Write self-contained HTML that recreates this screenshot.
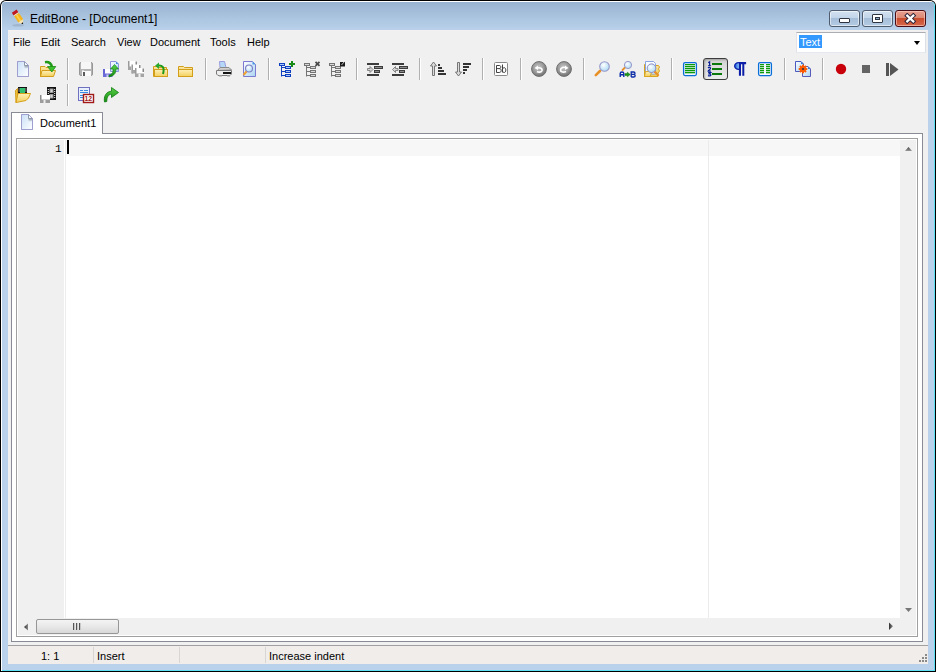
<!DOCTYPE html>
<html><head><meta charset="utf-8">
<style>
*{margin:0;padding:0;box-sizing:border-box}
html,body{width:936px;height:672px;overflow:hidden;background:#fff;font-family:"Liberation Sans",sans-serif;}
.a{position:absolute}
.t{position:absolute;white-space:pre;font-size:11px;line-height:13px;color:#000}
</style></head><body>
<!-- frame -->
<div class="a" style="left:0;top:0;width:936px;height:672px;background:#000;border-radius:6px 6px 0 0"></div>
<div class="a" style="left:1px;top:1px;width:934px;height:670px;background:#fff;border-radius:5px 5px 0 0"></div>
<div class="a" style="left:2px;top:2px;width:933px;height:669px;background:#5ee0f4;border-radius:4px 4px 0 0"></div>
<div class="a" style="left:2px;top:2px;width:932px;height:668px;background:#b9d1ea;border-radius:4px 4px 0 0"></div>
<div class="a" style="left:2px;top:2px;width:932px;height:28px;background:linear-gradient(#98b3d1,#b9d1ea);border-radius:4px 4px 0 0"></div>
<!-- client -->
<div class="a" style="left:8px;top:30px;width:920px;height:634px;background:#f0f0f0"></div>
<div class="a" style="left:8px;top:30px;width:920px;height:1px;background:#f5f1f1"></div>
<!-- title icon -->
<svg class="a" style="left:8px;top:6px" width="24" height="22" viewBox="8 6 24 22">
<ellipse cx="18" cy="25.3" rx="6" ry="1.2" fill="#8a9ab0" opacity="0.45"/>
<g transform="translate(18.4,17.4) rotate(-34)">
<rect x="-2.9" y="-7.5" width="5.8" height="3.2" fill="#c01820"/>
<rect x="-2.9" y="-4.3" width="5.8" height="1" fill="#f2e2c0"/>
<rect x="-2.9" y="-3.3" width="5.8" height="7.5" fill="#f6b41c"/>
<rect x="-1" y="-3.3" width="1.6" height="7.5" fill="#fcd050"/>
<path d="M-2.9 4.2H2.9L0 8.2Z" fill="#f8e6b0"/>
<path d="M-1.1 6.6H1.1L0 8.4Z" fill="#111"/>
</g>
</svg>
<!-- title -->
<div class="t" style="left:30px;top:12px;font-size:12px;line-height:14px;color:#000">EditBone - [Document1]</div>
<!-- window buttons -->
<div class="a" style="left:829px;top:10px;width:31px;height:17px;border:1px solid #4f5b6e;border-radius:3px;background:linear-gradient(#d3e1f0 0%,#c2d5ea 45%,#a5bdd8 46%,#b4cbe3 100%);box-shadow:inset 0 0 0 1px rgba(255,255,255,0.55)"></div>
<div class="a" style="left:839px;top:18px;width:11px;height:5px;border:1px solid #2e3440;border-radius:1px;background:#fff"></div>
<div class="a" style="left:862px;top:10px;width:31px;height:17px;border:1px solid #4f5b6e;border-radius:3px;background:linear-gradient(#d3e1f0 0%,#c2d5ea 45%,#a5bdd8 46%,#b4cbe3 100%);box-shadow:inset 0 0 0 1px rgba(255,255,255,0.55)"></div>
<div class="a" style="left:872px;top:14px;width:11px;height:9px;border:1px solid #2e3440;border-radius:1px;background:#fff"></div>
<div class="a" style="left:875px;top:17px;width:5px;height:3px;border:1px solid #2e3440;background:#8ea8c8"></div>
<div class="a" style="left:895px;top:10px;width:31px;height:17px;border:1px solid #4a0c14;border-radius:3px;background:linear-gradient(#e8a090 0%,#dc8874 45%,#c84a2a 46%,#d8684c 100%);box-shadow:inset 0 0 0 1px rgba(255,210,200,0.6)"></div>
<svg class="a" style="left:904px;top:13px" width="13" height="11" viewBox="0 0 13 11">
<path d="M3.2 2.6L9.3 8.4M9.3 2.6L3.2 8.4" stroke="#2e2438" stroke-width="4.2" stroke-linecap="square"/>
<path d="M3.2 2.6L9.3 8.4M9.3 2.6L3.2 8.4" stroke="#fff" stroke-width="2.2" stroke-linecap="square"/>
</svg>
<!-- menu -->
<div class="t" style="left:13px;top:36px">File</div>
<div class="t" style="left:41px;top:36px">Edit</div>
<div class="t" style="left:71px;top:36px">Search</div>
<div class="t" style="left:117px;top:36px">View</div>
<div class="t" style="left:150px;top:36px">Document</div>
<div class="t" style="left:210px;top:36px">Tools</div>
<div class="t" style="left:247px;top:36px">Help</div>
<!-- combo -->
<div class="a" style="left:796px;top:32px;width:130px;height:21px;background:#fff;border:1px solid #e3e9ef;border-top-color:#abadb3;border-left-color:#e2e3ea;border-right-color:#dbdfe6"></div>
<div class="a" style="left:799px;top:35px;width:23px;height:13px;background:#3399ff"></div>
<div class="t" style="left:800px;top:36px;color:#fff">Text</div>
<div class="a" style="left:914px;top:41px;width:0;height:0;border-left:3.5px solid transparent;border-right:3.5px solid transparent;border-top:4px solid #000"></div>
<!-- toolbar -->
<div class="a" style="left:703px;top:58px;width:25px;height:22px;border:1px solid #3c3c3c;border-radius:3px;background:linear-gradient(#d2d2d2,#ececec);box-shadow:inset 1px 1px 2px rgba(0,0,0,0.25)"></div>
<svg class="a" style="left:0;top:0" width="936" height="110" viewBox="0 0 936 110">
<defs>
<linearGradient id="foldsh" x1="0" y1="0" x2="0" y2="1"><stop offset="0" stop-color="#8c9aa8"/><stop offset="1" stop-color="#dfe8f2"/></linearGradient>
<linearGradient id="docg" x1="0" y1="0" x2="1" y2="1"><stop offset="0" stop-color="#c9e0f8"/><stop offset="1" stop-color="#ffffff"/></linearGradient>
<linearGradient id="docb" x1="0" y1="0" x2="1" y2="1"><stop offset="0" stop-color="#ffffff"/><stop offset="1" stop-color="#a9d4f2"/></linearGradient>
<linearGradient id="fold" x1="0" y1="0" x2="0" y2="1"><stop offset="0" stop-color="#fbe8a8"/><stop offset="1" stop-color="#f0c850"/></linearGradient>
<linearGradient id="foldf" x1="0" y1="0" x2="0" y2="1"><stop offset="0" stop-color="#fdf0b8"/><stop offset="1" stop-color="#f4cf5c"/></linearGradient>
<radialGradient id="circ" cx="0.45" cy="0.4" r="0.6"><stop offset="0" stop-color="#c8c8c8"/><stop offset="0.6" stop-color="#9a9a9a"/><stop offset="1" stop-color="#6e6e6e"/></radialGradient>
<radialGradient id="lens" cx="0.4" cy="0.35" r="0.7"><stop offset="0" stop-color="#ffffff"/><stop offset="1" stop-color="#a8d8f4"/></radialGradient>
<linearGradient id="grn" x1="0" y1="0" x2="0" y2="1"><stop offset="0" stop-color="#5ad24a"/><stop offset="1" stop-color="#138a10"/></linearGradient>
<linearGradient id="bulb" x1="0" y1="0" x2="1" y2="0"><stop offset="0" stop-color="#1e5ad8"/><stop offset="1" stop-color="#8cc8f8"/></linearGradient>
</defs>
<!-- separators row1 -->
<g fill="#b0b0b0">
<rect x="67" y="58" width="1" height="22"/><rect x="205" y="58" width="1" height="22"/><rect x="268" y="58" width="1" height="22"/>
<rect x="356" y="58" width="1" height="22"/><rect x="419" y="58" width="1" height="22"/><rect x="482" y="58" width="1" height="22"/>
<rect x="520" y="58" width="1" height="22"/><rect x="583" y="58" width="1" height="22"/><rect x="671" y="58" width="1" height="22"/>
<rect x="784" y="58" width="1" height="22"/><rect x="822" y="58" width="1" height="22"/>
<rect x="67" y="84" width="1" height="22"/>
</g>
<g fill="#ffffff">
<rect x="68" y="58" width="1" height="22"/><rect x="206" y="58" width="1" height="22"/><rect x="269" y="58" width="1" height="22"/>
<rect x="357" y="58" width="1" height="22"/><rect x="420" y="58" width="1" height="22"/><rect x="483" y="58" width="1" height="22"/>
<rect x="521" y="58" width="1" height="22"/><rect x="584" y="58" width="1" height="22"/><rect x="672" y="58" width="1" height="22"/>
<rect x="785" y="58" width="1" height="22"/><rect x="823" y="58" width="1" height="22"/>
<rect x="68" y="84" width="1" height="22"/>
</g>

<!-- 1 new doc -->
<g transform="translate(15,61)">
<path d="M2.5 0.5H9.5L13.5 4.5V15.5H2.5Z" fill="url(#docg)" stroke="#a4a4d4"/>
<rect x="9.5" y="4.5" width="4" height="3" fill="url(#foldsh)"/><path d="M9.5 0.5V4.5H13.5Z" fill="#f8fafc"/><path d="M9.5 0.5V4.5H13.5" fill="none" stroke="#8c98a8"/><path d="M2.5 0.5H9.5L13.5 4.5V15.5H2.5Z" fill="none" stroke="#a0a0d0"/>
</g>
<!-- 2 open with arrow -->
<g transform="translate(40,61)">
<path d="M0.5 5.5H5L6 6.5H12.5V15.5H0.5Z" fill="url(#fold)" stroke="#d39e1a"/>
<path d="M0.5 15.5L2 9.5H15.5L13.5 15.5Z" fill="url(#foldf)" stroke="#d39e1a"/>
<path d="M5 1.2C9 0.5 11 2 12 6" stroke="#1f9a18" stroke-width="2.6" fill="none"/>
<path d="M7.5 5.5H15.8L11.8 11Z" fill="#3cc02c" stroke="#1a8a14" stroke-width="0.8"/>
</g>
<!-- 3 save grey -->
<g transform="translate(78,61)">
<rect x="1.5" y="1.5" width="13" height="13" rx="1.5" fill="#b4b4b4" stroke="#969696"/>
<rect x="3" y="1" width="10" height="7" fill="#f6f6f6"/>
<rect x="4" y="9" width="2" height="1" fill="#dcdcdc"/>
<rect x="4" y="10" width="9" height="5" fill="#fafafa"/>
<rect x="5" y="11" width="2" height="4" fill="#5c5c5c"/>
</g>
<!-- 4 save as -->
<g transform="translate(103,61)">
<rect x="0" y="8" width="9" height="8" fill="#fff"/>
<rect x="0" y="8" width="2" height="8" fill="#6464d4"/>
<rect x="0" y="12.5" width="9.5" height="3.5" fill="#6c6cd8"/>
<rect x="3.5" y="13.5" width="2" height="2.5" fill="#d0d0f0"/>
<path d="M7.5 0.5H13L15.5 3V10.5H7.5Z" fill="url(#docb)" stroke="#9090e0"/>
<path d="M13 0.5V3H15.5Z" fill="#4a8ae0"/>
<path d="M11.5 3.5L7.5 8H10V10C10 12 8.5 13.3 6 14.3V16C10 15 12.8 13 12.8 9.5V8H15.5Z" fill="url(#grn)" stroke="#0a7a0a" stroke-width="0.6"/>
</g>
<!-- 5 save all grey -->
<g transform="translate(128,61)">
<g transform="translate(0,0)"><rect x="0" y="0" width="9" height="9" fill="#fff"/><rect x="0" y="0" width="1.5" height="9" fill="#9a9a9a"/><rect x="0" y="5.5" width="9" height="3.5" fill="#a4a4a4"/><rect x="3.5" y="6" width="2" height="3" fill="#f4f4f4"/><rect x="7.5" y="0.5" width="1.5" height="3.5" fill="#888"/></g><g transform="translate(3.5,3.5)"><rect x="0" y="0" width="9" height="9" fill="#fff"/><rect x="0" y="0" width="1.5" height="9" fill="#9a9a9a"/><rect x="0" y="5.5" width="9" height="3.5" fill="#a4a4a4"/><rect x="3.5" y="6" width="2" height="3" fill="#f4f4f4"/><rect x="7.5" y="0.5" width="1.5" height="3.5" fill="#888"/></g><g transform="translate(7,7)"><rect x="0" y="0" width="9" height="9" fill="#fff"/><rect x="0" y="0" width="1.5" height="9" fill="#9a9a9a"/><rect x="0" y="5.5" width="9" height="3.5" fill="#a4a4a4"/><rect x="3.5" y="6" width="2" height="3" fill="#f4f4f4"/><rect x="7.5" y="0.5" width="1.5" height="3.5" fill="#888"/></g>
</g>
<!-- 6 reopen -->
<g transform="translate(153,61)">
<path d="M0.5 5.5H5L6 6.5H13.5V15.5H0.5Z" fill="url(#fold)" stroke="#d39e1a"/>
<rect x="1.5" y="8.5" width="13" height="7" fill="url(#foldf)" stroke="#d39e1a"/>
<path d="M5 4.5C9 4 12 6 10 13" stroke="#1f9a18" stroke-width="2" fill="none"/>
<path d="M6 1.5L2 4.8L6 8Z" fill="#2aa82a"/>
</g>
<!-- 7 folder -->
<g transform="translate(178,61)">
<path d="M0.5 5.5H5.5L6.5 6.5H14.5V15.5H0.5Z" fill="url(#fold)" stroke="#d39e1a"/>
<rect x="0.5" y="8.5" width="14" height="7" fill="url(#foldf)" stroke="#d39e1a"/>
</g>
<!-- 8 printer -->
<g transform="translate(216,61)">
<path d="M3.5 0.5H8.5L10 6.5H4Z" fill="#b4d8f6" stroke="#9a9ae0"/>
<path d="M1.5 9.5L4 6.5H13L15.5 9Z" fill="#d0d0d0" stroke="#8a8a8a"/>
<path d="M0.5 9.5H15.5V13L14 14.5H2L0.5 13Z" fill="#eeeeee" stroke="#7a7a7a"/>
<rect x="7" y="11" width="8" height="2" fill="#151515"/>
<rect x="3" y="14" width="3" height="1.5" fill="#9a9a9a"/><rect x="11" y="14" width="3" height="1.5" fill="#9a9a9a"/>
</g>
<!-- 9 print preview -->
<g transform="translate(241,61)">
<path d="M2.5 0.5H11.5L14.5 3.5V15.5H2.5Z" fill="url(#docb)" stroke="#7a7ad0"/>
<path d="M11.5 0.5L14.5 3.5H11.5Z" fill="#4a9ae8"/>
<circle cx="8" cy="7.5" r="3.5" fill="url(#lens)" stroke="#7e7ec4" stroke-width="1.1"/>
<path d="M2.5 14L5.5 10.5" stroke="#f0a030" stroke-width="2"/>
</g>
<!-- 10 tree add -->
<g transform="translate(279,61)">
<g fill="#a8c8f8" stroke="#1040c0" stroke-width="1">
<rect x="0.5" y="2.5" width="5" height="2"/>
<rect x="6.5" y="5.5" width="5" height="2"/><rect x="6.5" y="9.5" width="5" height="2"/><rect x="6.5" y="13.5" width="5" height="2"/>
</g>
<path d="M2.5 5V15.5M2.5 6.5H6.5M2.5 10.5H6.5M2.5 14.5H6.5" stroke="#1040c0"/>
<path d="M13 0V6M10 3H16" stroke="#188a18" stroke-width="2"/>
</g>
<!-- 11 tree remove -->
<g transform="translate(304,61)">
<g fill="#d8d8d8" stroke="#747474" stroke-width="1">
<rect x="0.5" y="2.5" width="5" height="2"/>
<rect x="6.5" y="5.5" width="5" height="2"/><rect x="6.5" y="9.5" width="5" height="2"/><rect x="6.5" y="13.5" width="5" height="2"/>
</g>
<path d="M2.5 5V15.5M2.5 6.5H6.5M2.5 10.5H6.5M2.5 14.5H6.5" stroke="#747474"/>
<path d="M11.5 0.8L15.5 4.8M15.5 0.8L11.5 4.8" stroke="#4a4a4a" stroke-width="1.8"/>
</g>
<!-- 12 tree edit -->
<g transform="translate(329,61)">
<g fill="#d8d8d8" stroke="#747474" stroke-width="1">
<rect x="0.5" y="2.5" width="5" height="2"/>
<rect x="6.5" y="5.5" width="5" height="2"/><rect x="6.5" y="9.5" width="5" height="2"/><rect x="6.5" y="13.5" width="5" height="2"/>
</g>
<path d="M2.5 5V15.5M2.5 6.5H6.5M2.5 10.5H6.5M2.5 14.5H6.5" stroke="#747474"/>
<rect x="11" y="1" width="5" height="4.5" fill="#1a1a1a"/>
<path d="M12.5 4L15.5 0.5" stroke="#d0d0d0" stroke-width="0.9"/>
</g>
<!-- 13 indent -->
<g transform="translate(367,61)">
<rect x="0" y="2" width="12" height="2" fill="#3c3c3c"/>
<rect x="7" y="5" width="9" height="3" fill="#3c3c3c"/><rect x="8" y="6" width="7" height="1" fill="#8a8a8a"/>
<rect x="7" y="9" width="6" height="3" fill="#3c3c3c"/><rect x="8" y="10" width="4" height="1" fill="#8a8a8a"/>
<rect x="0" y="13" width="12" height="2" fill="#3c3c3c"/>
<path d="M0.5 7.5H3V5.5L6 8.5L3 11.5V9.5H0.5Z" fill="#d4d4d4" stroke="#7a7a7a" stroke-width="0.9"/>
</g>
<!-- 14 outdent -->
<g transform="translate(392,61)">
<rect x="0" y="2" width="12" height="2" fill="#3c3c3c"/>
<rect x="7" y="5" width="9" height="3" fill="#3c3c3c"/><rect x="8" y="6" width="7" height="1" fill="#8a8a8a"/>
<rect x="7" y="9" width="6" height="3" fill="#3c3c3c"/><rect x="8" y="10" width="4" height="1" fill="#8a8a8a"/>
<rect x="0" y="13" width="12" height="2" fill="#3c3c3c"/>
<path d="M6 7.5H3.5V5.5L0.5 8.5L3.5 11.5V9.5H6Z" fill="#d4d4d4" stroke="#7a7a7a" stroke-width="0.9"/>
</g>
<!-- 15 sort asc -->
<g transform="translate(430,61)">
<path d="M3.5 1L0.5 5H2.5V14.5H4.5V5H6.5Z" fill="#dcdcdc" stroke="#6a6a6a" stroke-width="0.9"/>
<g fill="#333"><rect x="8" y="3" width="2" height="2"/><rect x="8" y="6" width="4" height="2"/><rect x="8" y="9" width="6" height="2"/><rect x="8" y="12" width="8" height="2"/></g>
</g>
<!-- 16 sort desc -->
<g transform="translate(455,61)">
<path d="M3.5 15L0.5 11H2.5V1.5H4.5V11H6.5Z" fill="#dcdcdc" stroke="#6a6a6a" stroke-width="0.9"/>
<g fill="#333"><rect x="8" y="2" width="8" height="2"/><rect x="8" y="5" width="6" height="2"/><rect x="8" y="8" width="4" height="2"/><rect x="8" y="11" width="2" height="2"/></g>
</g>
<!-- 17 Bb -->
<g transform="translate(493,61)">
<rect x="1.5" y="1.5" width="13" height="13" rx="1" fill="#fff" stroke="#8a8a8a"/>
<path d="M3.5 11.5V4.5H6.2C7.4 4.5 7.8 5.2 7.8 5.9C7.8 6.8 7.2 7.6 6.2 7.6H3.5M6.2 7.6C7.5 7.6 8.2 8.3 8.2 9.4C8.2 10.7 7.5 11.5 6.2 11.5H3.5M9.5 3.5V11.5M9.5 8.5C9.5 7.3 10.3 6.7 11.2 6.7C12.3 6.7 12.8 7.7 12.8 9.1C12.8 10.6 12.2 11.5 11.2 11.5C10.3 11.5 9.5 10.9 9.5 9.7" fill="none" stroke="#404040" stroke-width="1"/>
</g>
<!-- 18 undo -->
<g transform="translate(531,61)">
<circle cx="8" cy="8" r="7.4" fill="url(#circ)" stroke="#707070" stroke-width="1"/>
<path d="M5.5 7.5C8 6 11.5 7 11 9.5C10.5 11.5 7.5 11.5 6 10.5" stroke="#fff" stroke-width="1.6" fill="none"/>
<path d="M3.5 7L7 4.5L7 9Z" fill="#fff"/>
</g>
<!-- 19 redo -->
<g transform="translate(556,61)">
<circle cx="8" cy="8" r="7.4" fill="url(#circ)" stroke="#707070" stroke-width="1"/>
<path d="M10.5 7C8 5.5 4.5 6.5 4.5 9C4.5 11.5 8 11.5 10 10.5" stroke="#fff" stroke-width="1.6" fill="none"/>
<path d="M12.5 7L9 4.5L9 9Z" fill="#fff"/>
</g>
<!-- 20 search -->
<g transform="translate(594,61)">
<path d="M1.8 14.2L6 10" stroke="#e89028" stroke-width="2.6" stroke-linecap="round"/>
<circle cx="10.5" cy="5.5" r="4.8" fill="url(#lens)" stroke="#9898c8" stroke-width="1.1"/>
</g>
<!-- 21 replace -->
<g transform="translate(619,61)">
<path d="M3.5 9L6 6.5" stroke="#e89028" stroke-width="1.8" stroke-linecap="round"/>
<circle cx="9" cy="4" r="3.6" fill="url(#lens)" stroke="#9898c8" stroke-width="1"/>
<path d="M1.2 16V12.5C1.2 11.5 1.8 11 3 11C4.2 11 4.8 11.5 4.8 12.5V16M1.2 13.8H4.8" fill="none" stroke="#0a2aa8" stroke-width="1.4"/>
<path d="M12.2 16V11H14.6C15.6 11 16 11.5 16 12.2C16 13 15.5 13.4 14.6 13.4H12.2M14.6 13.4C15.6 13.4 16.2 13.9 16.2 14.7C16.2 15.5 15.6 16 14.6 16H12.2" fill="none" stroke="#0a2aa8" stroke-width="1.3"/>
<path d="M6 12.6H8.3V11.2L11.2 13.5L8.3 15.8V14.4H6Z" fill="#1c9a1c" stroke="#0a6a0a" stroke-width="0.5"/>
</g>
<!-- 22 find in files -->
<g transform="translate(644,61)">
<path d="M0.5 3.5H4L5 4.5H14.5L15.5 6L14.5 8L15.5 10L14 12V15.5H0.5Z" fill="url(#fold)" stroke="#d8a420"/>
<path d="M1.5 0.5H9.5L11.5 2.5V13H1.5Z" fill="#f8fbff" stroke="#7e9ae0" stroke-width="0.9"/>
<path d="M0.5 15.5L1.5 10.5H8L6 15.5Z" fill="url(#foldf)" stroke="#d8a420" stroke-width="0.9"/>
<path d="M10.5 10.5L14 14" stroke="#e89028" stroke-width="2.2" stroke-linecap="round"/>
<circle cx="7.5" cy="7.2" r="4.3" fill="url(#lens)" stroke="#8c8cc0" stroke-width="1"/>
</g>
<!-- 23 green lines -->
<g transform="translate(682,61)">
<rect x="1.6" y="1.6" width="12.8" height="13" rx="1.5" fill="#f4f8ff" stroke="#0a6ed8" stroke-width="1.3"/>
<g fill="#0a9a0a"><rect x="3" y="3" width="10" height="1.3"/><rect x="3" y="5" width="10" height="1.3"/><rect x="3" y="7" width="10" height="1.3"/><rect x="3" y="9" width="10" height="1.3"/><rect x="3" y="11" width="10" height="1.3"/></g>
</g>
<!-- 24 line numbers (pressed) -->
<g transform="translate(707,61)">
<g fill="none" stroke="#0a1e96" stroke-width="1.2">
<path d="M1.2 1.8L2.6 0.9V4.7M1.2 4.6H3.8"/>
<path d="M1.1 7.1C1.6 6.2 3.6 6.2 3.6 7.4C3.6 8.4 1.1 9 1.1 10.1H3.9"/>
<path d="M1.1 11.6H3.7L2.3 12.8C3.5 12.8 3.9 13.3 3.9 13.9C3.9 14.9 2 15.2 1 14.5"/>
</g>
<g fill="#0a780a"><rect x="5" y="2" width="10" height="2"/><rect x="5" y="7" width="10" height="2"/><rect x="5" y="12" width="10" height="2"/></g>
</g>
<!-- 25 pilcrow -->
<g transform="translate(732,61)">
<path d="M7 0.9H14.1V3.2H12.3V14.7H10.3V3.2H9V14.7H6.9V9C3.8 9 2 7.2 2 5C2 2.6 3.8 0.9 7 0.9Z" fill="#0a1ea8"/>
<path d="M6.9 2.2C4.5 2.2 3.2 3.4 3.2 5C3.2 6.6 4.5 7.8 6.9 7.8Z" fill="url(#bulb)"/>
</g>
<!-- 26 two col -->
<g transform="translate(757,61)">
<rect x="1.6" y="1.6" width="12.8" height="13" rx="1.5" fill="#f4f8ff" stroke="#0a6ed8" stroke-width="1.3"/>
<g fill="#0a9a0a"><rect x="3" y="3" width="4" height="1.3"/><rect x="3" y="5" width="4" height="1.3"/><rect x="3" y="7" width="4" height="1.3"/><rect x="3" y="9" width="4" height="1.3"/><rect x="3" y="11" width="4" height="1.3"/>
<rect x="9" y="3" width="4" height="1.3"/><rect x="9" y="5" width="4" height="1.3"/><rect x="9" y="7" width="4" height="1.3"/><rect x="9" y="9" width="4" height="1.3"/><rect x="9" y="11" width="4" height="1.3"/></g>
</g>
<!-- 27 doc gear -->
<g transform="translate(795,61)">
<path d="M0.5 0.5H6L8.5 3V10.5H0.5Z" fill="url(#docb)" stroke="#4a5ac0"/>
<path d="M7.5 5.5H13L15.5 8V15.5H7.5Z" fill="url(#docb)" stroke="#5a5ab8"/>
<path d="M6 0.5L8.5 3H6Z M13 5.5L15.5 8H13Z" fill="#3a7ad8"/>
<g transform="translate(8,8)" fill="#ff5a00">
<circle r="2.8"/>
<rect x="-1" y="-4.3" width="2" height="8.6"/><rect x="-4.3" y="-1" width="8.6" height="2"/>
<rect x="-1" y="-4.3" width="2" height="8.6" transform="rotate(45)"/><rect x="-1" y="-4.3" width="2" height="8.6" transform="rotate(-45)"/>
<circle r="1" fill="#203050"/>
</g>
</g>
<!-- 28 record -->
<circle cx="841" cy="69" r="5.2" fill="#c8000a"/>
<!-- 29 stop -->
<rect x="862" y="65" width="8" height="8" fill="#646464"/>
<!-- 30 play -->
<rect x="886" y="63" width="3" height="13" fill="#555"/>
<path d="M890 63L898.5 69.5L890 76Z" fill="#555"/>

<!-- row 2 -->
<!-- 31 folder film -->
<g transform="translate(15,87)">
<rect x="3" y="0" width="9" height="7" fill="#111"/>
<rect x="5" y="1" width="5" height="5" fill="#30c070"/>
<g fill="#fff"><rect x="3.6" y="1.5" width="1" height="1"/><rect x="3.6" y="3.5" width="1" height="1"/><rect x="10.4" y="1.5" width="1" height="1"/><rect x="10.4" y="3.5" width="1" height="1"/></g>
<path d="M0.5 3.5L2.5 1.5V13L1 15.5Z" fill="#f0c040" stroke="#d39e1a"/>
<path d="M1 15.5L3 6.5H15.5L13.5 11L11 13.5L1 15.5Z" fill="url(#foldf)" stroke="#d8a018"/>
</g>
<!-- 32 film floppy -->
<g transform="translate(40,87)">
<rect x="7" y="0" width="9" height="13" fill="#111"/>
<rect x="9.5" y="1.5" width="4" height="4.5" fill="#9a9a9a"/><rect x="9.5" y="7" width="4" height="4.5" fill="#9a9a9a"/>
<rect x="10.5" y="2.5" width="2" height="2.5" fill="#d8d8d8"/><rect x="10.5" y="8" width="2" height="2.5" fill="#d8d8d8"/>
<g fill="#fff"><rect x="7.8" y="2" width="1" height="1"/><rect x="7.8" y="4" width="1" height="1"/><rect x="7.8" y="6" width="1" height="1"/>
<rect x="14.2" y="2" width="1" height="1"/><rect x="14.2" y="4" width="1" height="1"/><rect x="14.2" y="6" width="1" height="1"/><rect x="14.2" y="8" width="1" height="1"/><rect x="14.2" y="10" width="1" height="1"/></g>
<rect x="0" y="8" width="10" height="8" fill="#fff"/>
<rect x="0" y="8" width="1.5" height="8" fill="#8a8a8a"/>
<rect x="0" y="12.5" width="10" height="3.5" fill="#9c9c9c"/>
<rect x="3.5" y="13" width="2" height="3" fill="#eee"/>
</g>
<!-- 33 calendar doc -->
<g transform="translate(78,87)">
<rect x="0.5" y="0.5" width="11" height="13" fill="#e8f0fc" stroke="#7070c0"/>
<g fill="#3a8ae0"><rect x="2" y="3" width="3" height="1"/><rect x="6" y="3" width="4" height="1"/><rect x="2" y="5" width="8" height="1"/><rect x="2" y="8" width="3" height="1"/><rect x="2" y="10" width="3" height="1"/></g>
<rect x="5.5" y="7.5" width="10" height="8" fill="#fff" stroke="#a01818" stroke-width="1.4"/>
<text x="6.6" y="14.4" font-family="Liberation Sans" font-weight="bold" font-size="6.8" fill="#a01818">12</text>
</g>
<!-- 34 green redo arrow -->
<g transform="translate(103,87)">
<path d="M1.5 15C0.5 9.5 3 4.5 8.5 4.2V0.5L15.5 5.5L8.5 10.5V7.3C5.5 7.3 3.8 10 3.8 14.5Z" fill="url(#grn)" stroke="#0e7a0e" stroke-width="0.8"/>
</g>
</svg>
<!-- tab -->
<div class="a" style="left:11px;top:133px;width:912px;height:509px;background:#fff;border:1px solid #898c95"></div>
<div class="a" style="left:11px;top:112px;width:92px;height:22px;background:#fff;border:1px solid #898c95;border-bottom:none"></div>
<svg class="a" style="left:19px;top:114px" width="16" height="16" viewBox="0 0 16 16">
<path d="M2.5 0.5H9.5L13.5 4.5V15.5H2.5Z" fill="url(#docg)" stroke="#a4a4d4"/>
<rect x="9.5" y="4.5" width="4" height="3" fill="url(#foldsh)"/><path d="M9.5 0.5V4.5H13.5Z" fill="#f8fafc"/><path d="M9.5 0.5V4.5H13.5" fill="none" stroke="#8c98a8"/><path d="M2.5 0.5H9.5L13.5 4.5V15.5H2.5Z" fill="none" stroke="#a0a0d0"/>
</svg>
<div class="t" style="left:40px;top:117px">Document1</div>
<!-- editor -->
<div class="a" style="left:16px;top:138px;width:902px;height:499px;background:#fff;border:1px solid #a0a0a0"></div>
<div class="a" style="left:18px;top:140px;width:46px;height:478px;background:#f0f0f0"></div>
<div class="a" style="left:65px;top:140px;width:1px;height:478px;background:#ededed"></div>
<div class="a" style="left:66px;top:140px;width:834px;height:16px;background:#f7f7f7"></div>
<div class="a" style="left:708px;top:140px;width:1px;height:478px;background:#ebebeb"></div>
<div class="a" style="left:67px;top:140px;width:2px;height:14px;background:#000"></div>
<div class="t" style="left:55px;top:143px;font-family:'Liberation Mono';font-size:11px">1</div>
<!-- vscroll -->
<div class="a" style="left:900px;top:140px;width:16px;height:478px;background:#f0f0f0"></div>
<svg class="a" style="left:904px;top:146px" width="9" height="6" viewBox="0 0 9 6"><defs><linearGradient id="ag" x1="0" y1="0" x2="0" y2="1"><stop offset="0" stop-color="#404040"/><stop offset="1" stop-color="#9a9a9a"/></linearGradient></defs><path d="M1 5H8L4.5 1Z" fill="url(#ag)"/></svg>
<svg class="a" style="left:904px;top:607px" width="9" height="6" viewBox="0 0 9 6"><path d="M1 1H8L4.5 5Z" fill="#777"/></svg>
<!-- hscroll -->
<div class="a" style="left:18px;top:618px;width:898px;height:17px;background:#f0f0f0"></div>
<svg class="a" style="left:23px;top:623px" width="7" height="9" viewBox="0 0 7 9"><defs><linearGradient id="al" x1="0" y1="0" x2="1" y2="0"><stop offset="0" stop-color="#303030"/><stop offset="1" stop-color="#8a8a8a"/></linearGradient></defs><path d="M1 4L5 0.5V7.5Z" fill="url(#al)"/></svg>
<svg class="a" style="left:888px;top:622px" width="7" height="9" viewBox="0 0 7 9"><path d="M1 0.5L5 4.25L1 8Z" fill="url(#al)"/></svg>
<div class="a" style="left:36px;top:619px;width:83px;height:15px;border:1px solid #979797;border-radius:2px;background:linear-gradient(#f4f4f4,#e8e8e8 50%,#d8d8d8)"></div>
<div class="a" style="left:73px;top:623px;width:1px;height:7px;background:#555"></div><div class="a" style="left:74px;top:623px;width:1px;height:7px;background:#c8c8c8"></div>
<div class="a" style="left:76px;top:623px;width:1px;height:7px;background:#555"></div><div class="a" style="left:77px;top:623px;width:1px;height:7px;background:#c8c8c8"></div>
<div class="a" style="left:79px;top:623px;width:1px;height:7px;background:#555"></div><div class="a" style="left:80px;top:623px;width:1px;height:7px;background:#c8c8c8"></div>
<!-- status -->
<div class="a" style="left:8px;top:645px;width:920px;height:1px;background:#a0a0a0"></div>
<div class="a" style="left:8px;top:646px;width:920px;height:18px;background:#f0edeb"></div>
<div class="a" style="left:93px;top:647px;width:1px;height:16px;background:#d8d6d4"></div>
<div class="a" style="left:179px;top:647px;width:1px;height:16px;background:#d8d6d4"></div>
<div class="a" style="left:265px;top:647px;width:1px;height:16px;background:#d8d6d4"></div>
<div class="t" style="left:41px;top:650px">1: 1</div>
<div class="t" style="left:97px;top:650px">Insert</div>
<div class="t" style="left:269px;top:650px">Increase indent</div>
<svg class="a" style="left:916px;top:652px" width="12" height="12" viewBox="0 0 12 12">
<g fill="#8a8a8a"><rect x="9" y="2" width="2" height="2"/><rect x="6" y="5" width="2" height="2"/><rect x="9" y="5" width="2" height="2"/><rect x="3" y="8" width="2" height="2"/><rect x="6" y="8" width="2" height="2"/><rect x="9" y="8" width="2" height="2"/></g>
</svg>
</body></html>
